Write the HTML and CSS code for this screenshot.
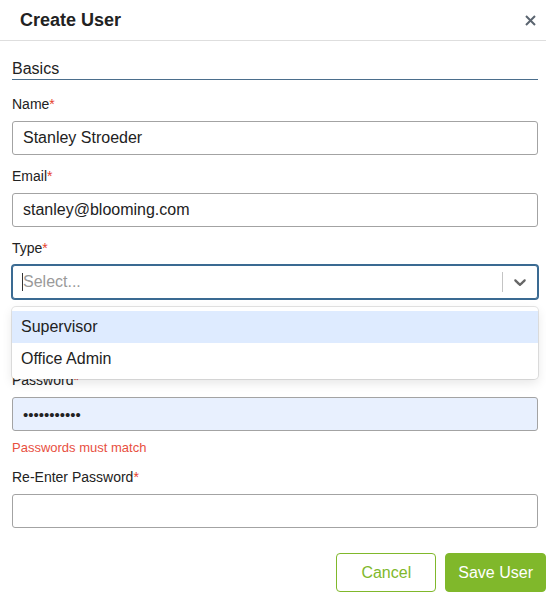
FILE: index.html
```html
<!DOCTYPE html>
<html lang="en">

<head>
    <meta charset="UTF-8">
    <meta name="viewport" content="width=device-width, initial-scale=1.0">
    <title>Create User</title>
    <link rel="stylesheet" href="styles.css">
</head>

<body>
    <div class="modal">
        <div class="modal-header">
            <h1>Create User</h1>
            <button class="close-btn" aria-label="Close">
                <svg width="11" height="11" viewBox="0 0 11 11">
                    <path d="M1 1L10 10M10 1L1 10" stroke="#5b6570" stroke-width="2" />
                </svg>
            </button>
        </div>

        <div class="modal-body">
            <h2 class="section-title">Basics</h2>

            <div class="field">
                <label>Name<span class="req">*</span></label>
                <input class="text-input" type="text" value="Stanley Stroeder">
            </div>

            <div class="field">
                <label>Email<span class="req">*</span></label>
                <input class="text-input" type="text" value="stanley@blooming.com">
            </div>

            <div class="field field-type">
                <label>Type<span class="req">*</span></label>
                <div class="select">
                    <div class="select-control">
                        <span class="caret"></span>
                        <span class="placeholder">Select...</span>
                        <span class="separator"></span>
                        <span class="chevron">
                            <svg width="20" height="20" viewBox="0 0 20 20">
                                <path fill="#666" d="M4.516 7.548c0.436-0.446 1.043-0.481 1.576 0l3.908 3.747 3.908-3.747c0.533-0.481 1.141-0.446 1.574 0 0.436 0.445 0.408 1.197 0 1.615-0.406 0.418-4.695 4.502-4.695 4.502-0.217 0.223-0.502 0.335-0.787 0.335s-0.57-0.112-0.789-0.335c0 0-4.287-4.084-4.695-4.502s-0.436-1.170 0-1.615z" />
                            </svg>
                        </span>
                    </div>
                    <div class="select-menu">
                        <div class="option active">Supervisor</div>
                        <div class="option">Office Admin</div>
                    </div>
                </div>
            </div>

            <div class="field field-password">
                <label>Password<span class="req">*</span></label>
                <input class="text-input autofilled" type="password" value="stanley1234">
                <p class="error">Passwords must match</p>
            </div>

            <div class="field">
                <label>Re-Enter Password<span class="req">*</span></label>
                <input class="text-input" type="password" value="">
            </div>
        </div>

        <div class="modal-footer">
            <button class="btn btn-outline">Cancel</button>
            <button class="btn btn-primary">Save User</button>
        </div>
    </div>
</body>

</html>
```

FILE: styles.css
```css
* {
    margin: 0;
    padding: 0;
    box-sizing: border-box;
}

body {
    font-family: "Liberation Sans", Arial, sans-serif;
    color: #222;
    background: #fff;
    overflow: hidden;
}

.modal-header {
    height: 41px;
    display: flex;
    align-items: center;
    justify-content: space-between;
    padding: 0 9px 0 20px;
    border-bottom: 1px solid #dedede;
}

.modal-header h1 {
    font-size: 18px;
    font-weight: bold;
    color: #222;
}

.close-btn {
    border: none;
    background: none;
    width: 14px;
    height: 14px;
    display: flex;
    align-items: center;
    justify-content: center;
    cursor: pointer;
}

.modal-body {
    padding: 18px 8px 0 12px;
}

.section-title {
    font-size: 16px;
    font-weight: normal;
    line-height: 20px;
    color: #222;
    border-bottom: 1px solid #4b6e8c;
    margin-bottom: 15px;
}

.field {
    margin-bottom: 12px;
}

.field label {
    display: block;
    font-size: 14px;
    line-height: 18px;
    margin-bottom: 8px;
    color: #222;
}

.req {
    color: #e5412d;
}

.text-input {
    display: block;
    width: 100%;
    height: 34px;
    border: 1px solid #a3a3a3;
    border-radius: 3px;
    padding: 0 10px;
    font-family: "Liberation Sans", Arial, sans-serif;
    font-size: 16px;
    color: #222;
    background: #fff;
    outline: none;
}

.autofilled {
    background: #e8f0fe;
    font-size: 15px;
}

.error {
    font-size: 13px;
    line-height: 16px;
    margin-top: 9px;
    color: #e8503f;
}

/* type select */
.field-type {
    margin-bottom: 72px;
}

.select {
    position: relative;
}

.select-control {
    height: 34px;
    display: flex;
    align-items: center;
    border: 1px solid #3a6a92;
    box-shadow: 0 0 0 1px #3a6a92;
    border-radius: 3px;
    padding-left: 9px;
    background: #fff;
}

.caret {
    width: 1px;
    height: 18px;
    background: #333;
}

.placeholder {
    flex: 1;
    font-size: 16px;
    color: #9a9a9a;
}

.separator {
    width: 1px;
    height: 20px;
    background: #c4c4c4;
}

.chevron {
    width: 34px;
    display: flex;
    align-items: center;
    justify-content: center;
}

.select-menu {
    position: absolute;
    top: 42px;
    left: 0;
    right: 0;
    background: #fff;
    border-radius: 4px;
    padding: 4px 0;
    box-shadow: 0 0 0 1px rgba(0, 0, 0, 0.1), 0 4px 11px rgba(0, 0, 0, 0.1);
    z-index: 2;
}

.option {
    font-size: 16px;
    line-height: 16px;
    padding: 8px 9px;
    color: #222;
}

.option.active {
    background: #deebff;
}

.modal-footer {
    display: flex;
    justify-content: flex-end;
    gap: 9px;
    padding: 13px 0 0 12px;
}

.btn {
    min-width: 100px;
    height: 39px;
    border-radius: 4px;
    font-family: "Liberation Sans", Arial, sans-serif;
    font-size: 16px;
    padding: 0 12px;
    cursor: pointer;
}

.btn-outline {
    background: #fff;
    border: 1px solid #80b82b;
    color: #80b82b;
}

.btn-primary {
    background: #80b82b;
    border: 1px solid #80b82b;
    color: #fff;
}
```
